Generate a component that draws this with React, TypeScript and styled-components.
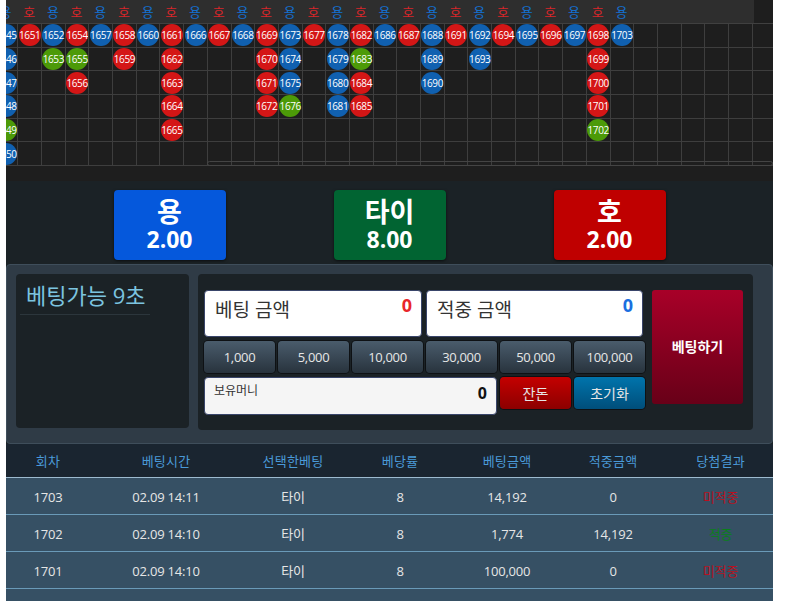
import styled, { createGlobalStyle } from 'styled-components'

type Side = 'b' | 'r' | 'g'

const GlobalStyle = createGlobalStyle`
  html, body {
    margin: 0;
    padding: 0;
    background: #fff;
    overflow: hidden;
  }
  body {
    font-family: "Open Sans", "Noto Sans CJK KR", sans-serif;
  }
  * {
    box-sizing: border-box;
  }
`

const Page = styled.div`
  width: 767px;
  height: 601px;
  margin-left: 6px;
  overflow: hidden;
  background: #1b2226;
`

const Board = styled.div`
  position: relative;
  height: 181px;
  background: #1e1e1e;
  overflow: hidden;
`

const HeadBand = styled.div`
  display: flex;
  width: 748px;
  height: 23px;
  background: #2e2e2e;
  overflow: hidden;
`

const HeadTrack = styled.div`
  display: flex;
  flex: none;
  margin-left: -12.35px;
`

const HeadLabel = styled.div<{ $red: boolean }>`
  width: 23.7px;
  flex: none;
  text-align: center;
  font-size: 13px;
  line-height: 24px;
  color: ${p => (p.$red ? '#d8262a' : '#1470d0')};
`

const Track = styled.div`
  display: flex;
  width: max-content;
  margin-left: -12.35px;
  border-top: 1px solid #404040;
`

const Column = styled.div`
  width: 23.7px;
  flex: none;
  display: flex;
  flex-direction: column;
  border-left: 1px solid #3e3e3e;
`

const Cell = styled.div`
  height: 23.7px;
  display: flex;
  align-items: center;
  justify-content: center;
  border-bottom: 1px solid #3e3e3e;
`

const Bead = styled.div<{ $side: Side }>`
  width: 22px;
  height: 22px;
  flex: none;
  border-radius: 50%;
  display: flex;
  align-items: center;
  justify-content: center;
  font-size: 10px;
  letter-spacing: -0.4px;
  color: #fff;
  background: ${p => (p.$side === 'b' ? '#1060b0' : p.$side === 'r' ? '#d41616' : '#4c9a08')};
`

const ScrollThumb = styled.div`
  position: absolute;
  left: 201px;
  top: 161px;
  width: 566px;
  height: 5px;
  border: 1px solid #444;
  border-radius: 3px;
`

const OddsRow = styled.div`
  display: grid;
  grid-template-columns: repeat(3, 220px);
  justify-content: center;
  justify-items: center;
  height: 83px;
  padding-top: 9px;
`

const OddsButton = styled.div<{ $bg: string }>`
  width: 112px;
  height: 70px;
  padding-bottom: 1px;
  display: flex;
  flex-direction: column;
  align-items: center;
  justify-content: center;
  border-radius: 4px;
  color: #fff;
  font-weight: 700;
  background: ${p => p.$bg};
  box-shadow: 0 1px 3px rgba(0, 0, 0, 0.6);
`

const OddsName = styled.div`
  font-size: 27px;
  line-height: 28px;
`

const OddsValue = styled.div`
  font-size: 23px;
  line-height: 26px;
`

const Panel = styled.div`
  display: flex;
  align-items: flex-start;
  gap: 9px;
  height: 180px;
  padding: 9px 19px 0 9px;
  background: #2f3b46;
  border: 1px solid #3f4e5b;
  border-radius: 4px;
`

const TimerBox = styled.div`
  width: 173px;
  height: 154px;
  padding: 6px 4px;
  background: #1b2226;
  border-radius: 4px;
`

const TimerText = styled.div`
  padding: 0 6px 4px;
  width: 130px;
  font-size: 22px;
  line-height: 30px;
  white-space: nowrap;
  color: #7cc4e0;
  border-bottom: 1px solid #2c363c;
`

const BetBox = styled.div`
  display: flex;
  align-items: flex-start;
  width: 555px;
  height: 156px;
  padding: 16px 0 0 6px;
  background: #1b2226;
  border-radius: 4px;
`

const BetForm = styled.div`
  width: 441px;
  display: flex;
  flex-direction: column;
  gap: 4px;
`

const InfoRow = styled.div`
  display: grid;
  grid-template-columns: 218px 217px;
  gap: 4px;
`

const InfoBox = styled.div`
  display: flex;
  justify-content: space-between;
  height: 47px;
  padding: 4px 9px 0 10px;
  background: #fff;
  border: 1px solid #39456a;
  border-radius: 4px;
`

const InfoLabel = styled.div`
  font-size: 19px;
  line-height: 30px;
  color: #333;
`

const InfoValue = styled.div<{ $color: string }>`
  font-size: 18px;
  font-weight: 700;
  line-height: 20px;
  color: ${p => p.$color};
`

const ChipRow = styled.div`
  display: grid;
  grid-template-columns: repeat(6, 71px);
  gap: 3px;
`

const ActionButton = styled.div<{ $top: string; $bottom: string; $label?: boolean }>`
  height: 32px;
  display: flex;
  align-items: center;
  justify-content: center;
  font-size: ${p => (p.$label ? '14px' : '13px')};
  letter-spacing: ${p => (p.$label ? '0' : '-0.3px')};
  color: #e6e6e6;
  border-radius: 4px;
  background: linear-gradient(${p => p.$top}, ${p => p.$bottom});
  box-shadow: 0 0 0 1px #0e1114;
`

const BalanceRow = styled.div`
  display: grid;
  grid-template-columns: 293px 71px 71px;
  gap: 3px;
  align-items: flex-start;
`

const BalanceBox = styled.div`
  display: flex;
  justify-content: space-between;
  height: 38px;
  padding: 3px 9px 0 9px;
  background: #f5f5f5;
  border: 1px solid #39456a;
  border-radius: 4px;
`

const BalanceLabel = styled.div`
  font-size: 12px;
  line-height: 20px;
  color: #333;
`

const BalanceValue = styled.div`
  font-size: 16px;
  font-weight: 700;
  line-height: 24px;
  color: #111;
`

const SubmitButton = styled.div`
  width: 91px;
  height: 114px;
  margin-left: 7px;
  padding-bottom: 2px;
  display: flex;
  align-items: center;
  justify-content: center;
  font-size: 14px;
  font-weight: 700;
  color: #fff;
  border-radius: 3px;
  background: linear-gradient(#a80028, #680018);
`

const TableRow = styled.div<{ $head?: boolean }>`
  display: grid;
  grid-template-columns: 84px 152px 102px 112px 102px 110px 105px;
  height: ${p => (p.$head ? '34px' : '37px')};
  padding-top: ${p => (p.$head ? '0' : '1px')};
  align-items: center;
  text-align: center;
  font-size: 13px;
  letter-spacing: ${p => (p.$head ? '0.2px' : '-0.2px')};
  background: ${p => (p.$head ? '#1a2530' : '#365064')};
  color: ${p => (p.$head ? '#4a9ad8' : '#e6e6e6')};
  border-bottom: 1px solid ${p => (p.$head ? '#9dbbd0' : '#6a9ab8')};
`

const TableRows = styled.div`
  height: 124px;
  background: #365064;
`

const Result = styled.span<{ $hit: boolean }>`
  color: ${p => (p.$hit ? '#0a7f1a' : '#b81020')};
`

// 열마다 1645 부터 이어지는 출목표
const columns: [number, Side][][] = [
  [[1645, 'b'], [1646, 'b'], [1647, 'b'], [1648, 'b'], [1649, 'g'], [1650, 'b']],
  [[1651, 'r']],
  [[1652, 'b'], [1653, 'g']],
  [[1654, 'r'], [1655, 'g'], [1656, 'r']],
  [[1657, 'b']],
  [[1658, 'r'], [1659, 'r']],
  [[1660, 'b']],
  [[1661, 'r'], [1662, 'r'], [1663, 'r'], [1664, 'r'], [1665, 'r']],
  [[1666, 'b']],
  [[1667, 'r']],
  [[1668, 'b']],
  [[1669, 'r'], [1670, 'r'], [1671, 'r'], [1672, 'r']],
  [[1673, 'b'], [1674, 'b'], [1675, 'b'], [1676, 'g']],
  [[1677, 'r']],
  [[1678, 'b'], [1679, 'b'], [1680, 'b'], [1681, 'b']],
  [[1682, 'r'], [1683, 'g'], [1684, 'r'], [1685, 'r']],
  [[1686, 'b']],
  [[1687, 'r']],
  [[1688, 'b'], [1689, 'b'], [1690, 'b']],
  [[1691, 'r']],
  [[1692, 'b'], [1693, 'b']],
  [[1694, 'r']],
  [[1695, 'b']],
  [[1696, 'r']],
  [[1697, 'b']],
  [[1698, 'r'], [1699, 'r'], [1700, 'r'], [1701, 'r'], [1702, 'g']],
  [[1703, 'b']],
  [], [], [], [], [], [], [],
]

const chips = ['1,000', '5,000', '10,000', '30,000', '50,000', '100,000']
const heads = ['회차', '베팅시간', '선택한베팅', '베당률', '베팅금액', '적중금액', '당첨결과']
const rows = [
  { no: 1703, time: '02.09 14:11', bet: '14,192', win: '0', hit: false },
  { no: 1702, time: '02.09 14:10', bet: '1,774', win: '14,192', hit: true },
  { no: 1701, time: '02.09 14:10', bet: '100,000', win: '0', hit: false },
]

export default function App() {
  return (
    <Page>
      <GlobalStyle />
      <Board>
        <HeadBand>
          <HeadTrack>
            {columns.slice(0, 27).map((_, i) => (
              <HeadLabel key={i} $red={i % 2 === 1}>{i % 2 === 1 ? '호' : '용'}</HeadLabel>
            ))}
          </HeadTrack>
        </HeadBand>
        <Track>
          {columns.map((col, i) => (
            <Column key={i}>
              {[0, 1, 2, 3, 4, 5].map(r => (
                <Cell key={r}>
                  {col[r] && <Bead $side={col[r][1]}>{col[r][0]}</Bead>}
                </Cell>
              ))}
            </Column>
          ))}
        </Track>
        <ScrollThumb />
      </Board>
      <OddsRow>
        <OddsButton $bg="#0558dc"><OddsName>용</OddsName><OddsValue>2.00</OddsValue></OddsButton>
        <OddsButton $bg="#016432"><OddsName>타이</OddsName><OddsValue>8.00</OddsValue></OddsButton>
        <OddsButton $bg="#bf0000"><OddsName>호</OddsName><OddsValue>2.00</OddsValue></OddsButton>
      </OddsRow>
      <Panel>
        <TimerBox>
          <TimerText>베팅가능 9초</TimerText>
        </TimerBox>
        <BetBox>
          <BetForm>
            <InfoRow>
              <InfoBox><InfoLabel>베팅 금액</InfoLabel><InfoValue $color="#e8262a">0</InfoValue></InfoBox>
              <InfoBox><InfoLabel>적중 금액</InfoLabel><InfoValue $color="#1a6fe0">0</InfoValue></InfoBox>
            </InfoRow>
            <ChipRow>
              {chips.map(c => <ActionButton key={c} $top="#4a5c6c" $bottom="#28333d">{c}</ActionButton>)}
            </ChipRow>
            <BalanceRow>
              <BalanceBox><BalanceLabel>보유머니</BalanceLabel><BalanceValue>0</BalanceValue></BalanceBox>
              <ActionButton $label $top="#c40000" $bottom="#8c0000">잔돈</ActionButton>
              <ActionButton $label $top="#0074ac" $bottom="#004e7a">초기화</ActionButton>
            </BalanceRow>
          </BetForm>
          <SubmitButton>베팅하기</SubmitButton>
        </BetBox>
      </Panel>
      <TableRow $head>
        {heads.map(h => <div key={h}>{h}</div>)}
      </TableRow>
      <TableRows>
        {rows.map(r => (
          <TableRow key={r.no}>
            <div>{r.no}</div>
            <div>{r.time}</div>
            <div>타이</div>
            <div>8</div>
            <div>{r.bet}</div>
            <div>{r.win}</div>
            <Result $hit={r.hit}>{r.hit ? '적중' : '미적중'}</Result>
          </TableRow>
        ))}
      </TableRows>
    </Page>
  )
}
